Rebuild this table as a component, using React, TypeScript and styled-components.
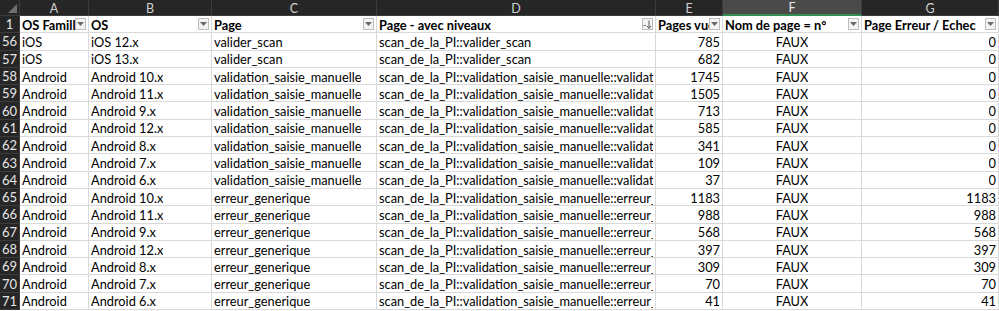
import React from "react";
import styled, { createGlobalStyle } from "styled-components";

const GlobalStyle = createGlobalStyle`
  html, body {
    margin: 0;
    padding: 0;
    background: #ffffff;
  }
  body {
    font-family: Lato, "Liberation Sans", sans-serif;
    overflow: hidden;
  }
`;

type Row = {
  n: number;
  family: string;
  os: string;
  page: string;
  level: string;
  views: number;
  err: number;
};

const rows: Row[] = [
  { n: 56, family: "iOS", os: "iOS 12.x", page: "valider_scan", level: "scan_de_la_PI::valider_scan", views: 785, err: 0 },
  { n: 57, family: "iOS", os: "iOS 13.x", page: "valider_scan", level: "scan_de_la_PI::valider_scan", views: 682, err: 0 },
  { n: 58, family: "Android", os: "Android 10.x", page: "validation_saisie_manuelle", level: "scan_de_la_PI::validation_saisie_manuelle::validation", views: 1745, err: 0 },
  { n: 59, family: "Android", os: "Android 11.x", page: "validation_saisie_manuelle", level: "scan_de_la_PI::validation_saisie_manuelle::validation", views: 1505, err: 0 },
  { n: 60, family: "Android", os: "Android 9.x", page: "validation_saisie_manuelle", level: "scan_de_la_PI::validation_saisie_manuelle::validation", views: 713, err: 0 },
  { n: 61, family: "Android", os: "Android 12.x", page: "validation_saisie_manuelle", level: "scan_de_la_PI::validation_saisie_manuelle::validation", views: 585, err: 0 },
  { n: 62, family: "Android", os: "Android 8.x", page: "validation_saisie_manuelle", level: "scan_de_la_PI::validation_saisie_manuelle::validation", views: 341, err: 0 },
  { n: 63, family: "Android", os: "Android 7.x", page: "validation_saisie_manuelle", level: "scan_de_la_PI::validation_saisie_manuelle::validation", views: 109, err: 0 },
  { n: 64, family: "Android", os: "Android 6.x", page: "validation_saisie_manuelle", level: "scan_de_la_PI::validation_saisie_manuelle::validation", views: 37, err: 0 },
  { n: 65, family: "Android", os: "Android 10.x", page: "erreur_generique", level: "scan_de_la_PI::validation_saisie_manuelle::erreur_generique", views: 1183, err: 1183 },
  { n: 66, family: "Android", os: "Android 11.x", page: "erreur_generique", level: "scan_de_la_PI::validation_saisie_manuelle::erreur_generique", views: 988, err: 988 },
  { n: 67, family: "Android", os: "Android 9.x", page: "erreur_generique", level: "scan_de_la_PI::validation_saisie_manuelle::erreur_generique", views: 568, err: 568 },
  { n: 68, family: "Android", os: "Android 12.x", page: "erreur_generique", level: "scan_de_la_PI::validation_saisie_manuelle::erreur_generique", views: 397, err: 397 },
  { n: 69, family: "Android", os: "Android 8.x", page: "erreur_generique", level: "scan_de_la_PI::validation_saisie_manuelle::erreur_generique", views: 309, err: 309 },
  { n: 70, family: "Android", os: "Android 7.x", page: "erreur_generique", level: "scan_de_la_PI::validation_saisie_manuelle::erreur_generique", views: 70, err: 70 },
  { n: 71, family: "Android", os: "Android 6.x", page: "erreur_generique", level: "scan_de_la_PI::validation_saisie_manuelle::erreur_generique", views: 41, err: 41 },
];

const letters = ["A", "B", "C", "D", "E", "F", "G"];

const headers: { label: string; sorted?: boolean }[] = [
  { label: "OS Famille" },
  { label: "OS" },
  { label: "Page" },
  { label: "Page - avec niveaux", sorted: true },
  { label: "Pages vues" },
  { label: "Nom de page = n°" },
  { label: "Page Erreur / Echec" },
];

const Sheet = styled.div`
  display: grid;
  grid-template-columns: 20px 69px 123px 165px 279px 67px 139px 137px;
  grid-template-rows: 16px repeat(17, 17.3px);
  width: 999px;
  height: 311px;
  background: #ffffff;
  overflow: hidden;
`;

const Corner = styled.div`
  position: relative;
  background: #262626;
  border-right: 1px solid #3c3c3c;
  border-bottom: 1px solid #3c3c3c;
  box-sizing: border-box;

  &::after {
    content: "";
    position: absolute;
    right: 2px;
    bottom: 2px;
    border-style: solid;
    border-width: 0 0 9px 9px;
    border-color: transparent transparent #6e6e6e transparent;
  }
`;

const ColHead = styled.div<{ $active?: boolean }>`
  display: flex;
  align-items: center;
  justify-content: center;
  box-sizing: border-box;
  background: ${({ $active }) => ($active ? "#4a4a4a" : "#262626")};
  color: ${({ $active }) => ($active ? "#e8e8e8" : "#cfcfcf")};
  border-right: 1px solid #3c3c3c;
  border-bottom: ${({ $active }) =>
    $active ? "2px solid #2f8f55" : "1px solid #3c3c3c"};
  font-size: 12.5px;
  padding-top: 1px;
`;

const RowHead = styled.div`
  display: flex;
  align-items: center;
  justify-content: center;
  box-sizing: border-box;
  background: #262626;
  color: #e6e6e6;
  border-right: 1px solid #3c3c3c;
  border-bottom: 1px solid #3c3c3c;
  font-size: 13px;
`;

const Cell = styled.div<{
  $align?: "left" | "right" | "center";
  $header?: boolean;
}>`
  position: relative;
  display: flex;
  align-items: center;
  justify-content: ${({ $align }) =>
    $align === "right" ? "flex-end" : $align === "center" ? "center" : "flex-start"};
  box-sizing: border-box;
  padding: 1px 2px 0 2px;
  border-right: 1px solid #d9d9d9;
  border-bottom: 1px solid #d9d9d9;
  color: #000000;
  font-size: 12.8px;
  font-weight: ${({ $header }) => ($header ? 700 : 400)};
  white-space: nowrap;
  overflow: hidden;
`;

const Label = styled.span`
  min-width: 0;
  overflow: hidden;
  white-space: nowrap;
`;

const FilterButton = styled.span`
  position: absolute;
  right: 2px;
  top: 2px;
  width: 11px;
  height: 12px;
  box-sizing: border-box;
  border: 1px solid #bdbdbd;
  background: #f3f3f3;
  display: flex;
  align-items: center;
  justify-content: center;
`;

const Arrow = () => (
  <svg width="7" height="4" viewBox="0 0 7 4">
    <path d="M0 0 L7 0 L3.5 4 Z" fill="#6a6a6a" />
  </svg>
);

const SortArrow = () => (
  <svg width="9" height="9" viewBox="0 0 9 9">
    <path d="M0.5 5.5 L3 5.5" stroke="#777" strokeWidth="1" />
    <path d="M6 0.5 L6 8" stroke="#555" strokeWidth="1" />
    <path d="M4 6 L6 8.5 L8 6" stroke="#555" strokeWidth="1" fill="none" />
  </svg>
);

const App = () => {
  return (
    <>
      <GlobalStyle />
      <Sheet>
        <Corner />
        {letters.map((l) => (
          <ColHead key={l} $active={l === "F"}>
            {l}
          </ColHead>
        ))}

        <RowHead>1</RowHead>
        {headers.map((h) => (
          <Cell key={h.label} $header>
            <Label>{h.label}</Label>
            <FilterButton>{h.sorted ? <SortArrow /> : <Arrow />}</FilterButton>
          </Cell>
        ))}

        {rows.map((r) => (
          <React.Fragment key={r.n}>
            <RowHead>{r.n}</RowHead>
            <Cell>
              <Label>{r.family}</Label>
            </Cell>
            <Cell>
              <Label>{r.os}</Label>
            </Cell>
            <Cell>
              <Label>{r.page}</Label>
            </Cell>
            <Cell>
              <Label>{r.level}</Label>
            </Cell>
            <Cell $align="right">
              <Label>{r.views}</Label>
            </Cell>
            <Cell $align="center">
              <Label>FAUX</Label>
            </Cell>
            <Cell $align="right">
              <Label>{r.err}</Label>
            </Cell>
          </React.Fragment>
        ))}
      </Sheet>
    </>
  );
};

export default App;
